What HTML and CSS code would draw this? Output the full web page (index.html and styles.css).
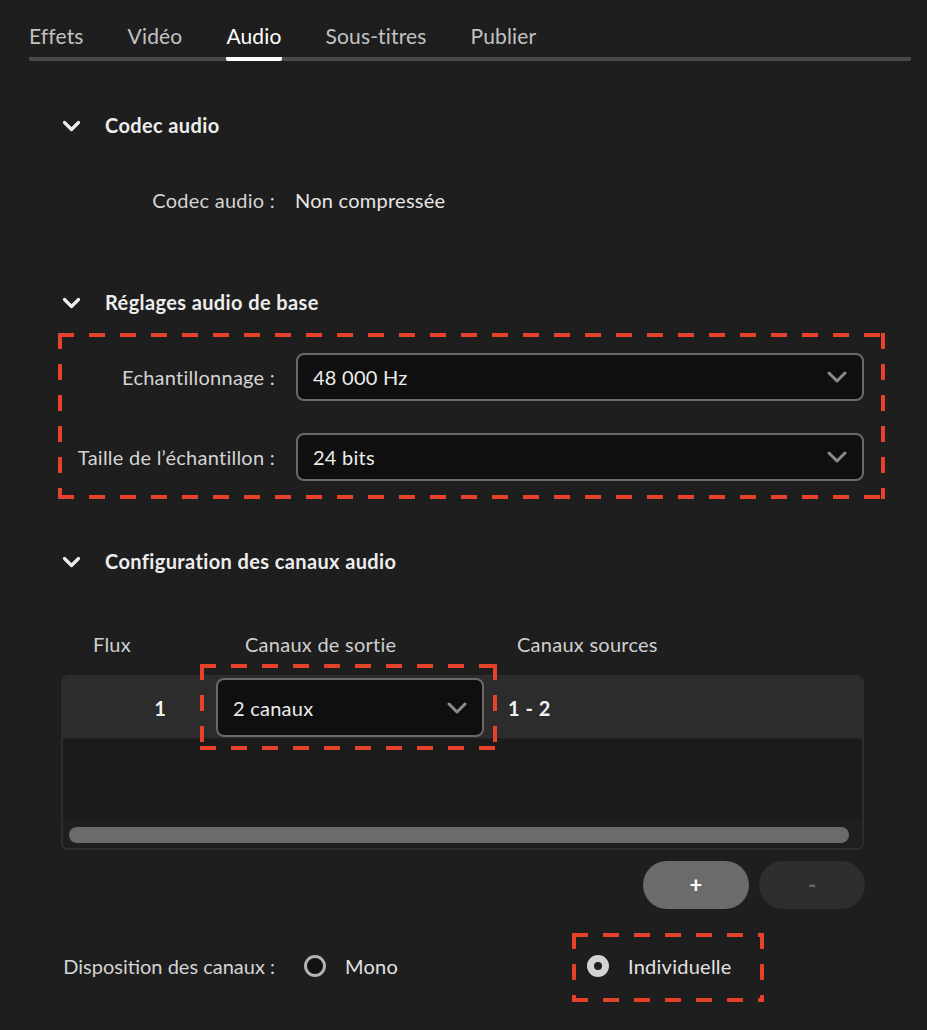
FILE: index.html
```
<!DOCTYPE html>
<html lang="fr">
<head>
<meta charset="utf-8">
<title>Audio</title>
<link rel="stylesheet" href="styles.css">
</head>
<body>
<div class="panel">
  <nav class="tabbar">
    <span class="tab">Effets</span>
    <span class="tab">Vidéo</span>
    <span class="tab active">Audio</span>
    <span class="tab">Sous-titres</span>
    <span class="tab">Publier</span>
  </nav>

  <div class="sec-head s1">
    <svg class="chev" viewBox="0 0 19 12"><path d="M2.5 2.5 L9.5 9.5 L16.5 2.5"/></svg>
    <span>Codec audio</span>
  </div>
  <div class="field codec">
    <span class="label">Codec audio :</span>
    <span class="value">Non compressée</span>
  </div>

  <div class="sec-head s2">
    <svg class="chev" viewBox="0 0 19 12"><path d="M2.5 2.5 L9.5 9.5 L16.5 2.5"/></svg>
    <span>Réglages audio de base</span>
  </div>
  <div class="dashed base">
    <div class="field">
      <span class="label">Echantillonnage :</span>
      <div class="select"><span>48 000 Hz</span><svg class="dd" viewBox="0 0 20 12"><path d="M2 2 L10 10 L18 2"/></svg></div>
    </div>
    <div class="field">
      <span class="label">Taille de l’échantillon :</span>
      <div class="select"><span>24 bits</span><svg class="dd" viewBox="0 0 20 12"><path d="M2 2 L10 10 L18 2"/></svg></div>
    </div>
  </div>

  <div class="sec-head s3">
    <svg class="chev" viewBox="0 0 19 12"><path d="M2.5 2.5 L9.5 9.5 L16.5 2.5"/></svg>
    <span>Configuration des canaux audio</span>
  </div>
  <div class="thead">
    <span>Flux</span>
    <span>Canaux de sortie</span>
    <span>Canaux sources</span>
  </div>
  <div class="table">
    <div class="trow">
      <span class="num">1</span>
      <div class="select row-select marked"><span>2 canaux</span><svg class="dd" viewBox="0 0 20 12"><path d="M2 2 L10 10 L18 2"/></svg></div>
      <span class="src">1 - 2</span>
    </div>
    <div class="tbody"></div>
    <div class="hscroll"><div class="thumb"></div></div>
  </div>
  <div class="btns">
    <button class="btn add">+</button>
    <button class="btn rem">-</button>
  </div>

  <div class="layout-row">
    <span class="label">Disposition des canaux :</span>
    <span class="opt mono"><span class="radio"></span><span>Mono</span></span>
    <span class="opt indiv marked"><span class="radio on"></span><span>Individuelle</span></span>
  </div>
</div>
</body>
</html>
```
FILE: styles.css
```
* { box-sizing: border-box; }

body {
  margin: 0;
  background: #1e1e1e;
  font-family: Lato, "Liberation Sans", sans-serif;
  color: #d6d6d6;
  font-size: 20px;
  line-height: 24px;
  letter-spacing: 0.25px;
}

.panel {
  width: 927px;
  height: 1030px;
  overflow: hidden;
}

/* Tabs */
.tabbar {
  display: flex;
  gap: 44px;
  margin: 24px 16px 0 29px;
  background: linear-gradient(#494949, #494949) left bottom / 100% 4px no-repeat;
  border-radius: 2px;
}
.tab {
  font-size: 21px;
  line-height: 24px;
  letter-spacing: 0.15px;
  color: #c2c2c2;
  padding-bottom: 9px;
  border-bottom: 4px solid transparent;
  border-radius: 2px;
  white-space: nowrap;
}
.tab.active {
  color: #ffffff;
  border-bottom-color: #ffffff;
}

/* Section headers */
.sec-head {
  display: flex;
  align-items: center;
  gap: 24px;
  padding-left: 62px;
  height: 24px;
  font-weight: 700;
  font-size: 20px;
  letter-spacing: 0.38px;
  color: #ededed;
}
.chev {
  width: 19px;
  height: 12px;
  margin-top: 2px;
  fill: none;
  stroke: #ededed;
  stroke-width: 3.2;
  stroke-linecap: round;
  stroke-linejoin: round;
}
.s1 { margin-top: 52px; }
.s2 { margin-top: 78px; }
.s3 { margin-top: 50px; }

/* Fields */
.field {
  display: grid;
  grid-template-columns: 213px 1fr;
  column-gap: 20px;
  align-items: center;
}
.label {
  text-align: right;
  color: #d4d4d4;
  white-space: nowrap;
}
.value { color: #e6e6e6; }
.codec { margin: 51px 0 0 62px; }

/* dashed annotation frame */
.dashed {
  background:
    repeating-linear-gradient(90deg, #e5412b 0 16px, transparent 16px 31px) left top / 100% 4px no-repeat,
    repeating-linear-gradient(90deg, #e5412b 0 16px, transparent 16px 31px) left bottom / 100% 4px no-repeat,
    repeating-linear-gradient(180deg, #e5412b 0 16px, transparent 16px 31px) left top / 4px 100% no-repeat,
    repeating-linear-gradient(180deg, #e5412b 0 16px, transparent 16px 31px) right top / 4px 100% no-repeat;
}
.base {
  margin: 19px 42px 0 58px;
  padding: 20px 21px 18px 4px;
  display: flex;
  flex-direction: column;
  gap: 32px;
}
.base .field { column-gap: 21px; }

.select {
  height: 48px;
  border: 2px solid #696969;
  border-radius: 8px;
  background: #0f0f0f;
  display: flex;
  align-items: center;
  justify-content: space-between;
  padding: 0 15px 0 15px;
  color: #ececec;
}
.dd {
  width: 20px;
  height: 12px;
  fill: none;
  stroke: #8b8b8b;
  stroke-width: 3;
  stroke-linecap: round;
  stroke-linejoin: round;
}

/* Table */
.thead {
  margin-top: 59px;
  padding-left: 93px;
  display: grid;
  grid-template-columns: 152px 272px auto;
  color: #cfcfcf;
}
.table {
  margin: 19px 63px 0 61px;
  border: 2px solid #2d2d2d;
  border-radius: 7px;
  background: #1b1b1b;
}
.trow {
  height: 62px;
  display: flex;
  align-items: center;
  background: #2c2c2c;
  border-bottom: 1px solid #222222;
  border-radius: 5px 5px 0 0;
  font-weight: 700;
  color: #f2f2f2;
}
.num {
  width: 103px;
  text-align: right;
}
.row-select {
  margin-left: 50px;
  width: 268px;
  height: 59px;
  font-weight: 400;
}
.src { margin-left: 24px; letter-spacing: 0.5px; }
.marked { position: relative; }
.marked::after {
  content: "";
  position: absolute;
  pointer-events: none;
  background:
    repeating-linear-gradient(90deg, #e5412b 0 16px, transparent 16px 31px) left top / 100% 4px no-repeat,
    repeating-linear-gradient(90deg, #e5412b 0 16px, transparent 16px 31px) left bottom / 100% 4px no-repeat,
    repeating-linear-gradient(180deg, #e5412b 0 16px, transparent 16px 31px) left top / 4px 100% no-repeat,
    repeating-linear-gradient(180deg, #e5412b 0 16px, transparent 16px 31px) right top / 4px 100% no-repeat;
}
.row-select::after {
  top: -16px;
  left: -18px;
  right: -15px;
  bottom: -15px;
}
.tbody {
  height: 80px;
  background: #1b1b1b;
}
.hscroll {
  height: 29px;
  padding: 8px 13px 0 6px;
  background: #1f1f1f;
  border-radius: 0 0 5px 5px;
}
.thumb {
  height: 16px;
  border-radius: 8px;
  background: #6b6b6b;
}

/* Buttons */
.btns {
  display: flex;
  justify-content: flex-end;
  gap: 10px;
  margin: 11px 62px 0 0;
}
.btn {
  width: 106px;
  height: 48px;
  border: none;
  border-radius: 24px;
  font-family: Lato, "Liberation Sans", sans-serif;
  font-size: 22px;
  font-weight: 700;
  line-height: 24px;
  padding: 0;
}
.add { background: #6b6b6b; color: #ffffff; }
.rem { background: #2e2e2e; color: #676767; }

/* Radio row */
.layout-row {
  display: flex;
  align-items: center;
  margin-top: 45px;
  padding-left: 62px;
  height: 24px;
}
.layout-row .label {
  width: 213px;
  flex: none;
  letter-spacing: 0;
}
.opt {
  display: flex;
  align-items: center;
  gap: 19px;
  color: #e2e2e2;
  flex: none;
}
.mono {
  margin-left: 29px;
  width: 283px;
}
.indiv { width: 154px; }
.radio {
  width: 22px;
  height: 22px;
  border-radius: 50%;
  border: 3.5px solid #b2b2b2;
  background: #111111;
  flex: none;
}
.radio.on {
  border: 7px solid #d3d3d3;
  background: #1e1e1e;
}
.indiv::after {
  top: -21px;
  left: -15px;
  right: -23px;
  bottom: -24px;
}
```
